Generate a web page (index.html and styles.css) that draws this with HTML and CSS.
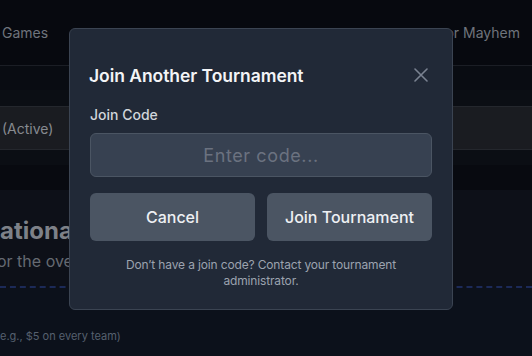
FILE: index.html
```html
<!DOCTYPE html>
<html>
<head>
<meta charset="utf-8">
<link rel="stylesheet" href="styles.css">
</head>
<body>
<div class="page">
  <header class="topbar">
    <span class="tab">Games</span>
    <span class="tab tab-right">or Mayhem</span>
  </header>
  <div class="band band-a"></div>
  <div class="band band-b"></div>
  <div class="row"><span class="row-text">(Active)</span></div>
  <div class="band band-c"></div>
  <div class="band band-d"></div>
  <section class="panel">
    <div class="panel-clip">
      <h2 class="panel-title">ational</h2>
      <p class="panel-sub">or the overall</p>
    </div>
  </section>
  <div class="lower">
    <p class="hint">e.g., $5 on every team)</p>
  </div>
</div>

<div class="modal">
  <div class="modal-head">
    <h3 class="modal-title">Join Another Tournament</h3>
    <button class="close" aria-label="Close">
      <svg width="14" height="14" viewBox="0 0 14 14"><path d="M1 1 L13 13 M13 1 L1 13" stroke="#7a8291" stroke-width="1.6" stroke-linecap="round" fill="none"/></svg>
    </button>
  </div>
  <label class="label">Join Code</label>
  <input class="code" type="text" placeholder="Enter code...">
  <div class="actions">
    <button class="btn">Cancel</button>
    <button class="btn">Join Tournament</button>
  </div>
  <p class="foot">Don’t have a join code? Contact your tournament administrator.</p>
</div>
</body>
</html>
```
FILE: styles.css
```css
* { box-sizing: border-box; }
html, body { margin: 0; padding: 0; }
body {
  width: 532px;
  height: 356px;
  overflow: hidden;
  background: #0c111b;
  font-family: Inter, "Noto Sans", sans-serif;
}
.page { display: flex; flex-direction: column; }
.topbar {
  height: 66px;
  background: #07090f;
  border-bottom: 1px solid #1b1e25;
  display: flex;
  justify-content: space-between;
  align-items: center;
  padding: 0 12px 0 2px;
}
.tab { color: #6f747c; font-size: 14px; }
.band-a { height: 24px; background: #090c12; }
.band-b { height: 16px; background: #0b0e14; }
.row {
  height: 44px;
  background: #1a1c21;
  border-top: 1px solid #24272d;
  border-bottom: 1px solid #24272d;
  display: flex;
  align-items: center;
  padding-left: 2px;
}
.row-text { color: #878a90; font-size: 14px; }
.band-c { height: 15px; background: #0b0e14; }
.band-d { height: 25px; background: #080a10; }
.panel {
  height: 98px;
  background: #0d1018;
  border-bottom: 2px dashed #1c2a58;
  padding-top: 26px;
}
.panel-clip {
  width: 69px;
  overflow: hidden;
  white-space: nowrap;
}
.panel-title {
  margin: 0;
  font-size: 24px;
  font-weight: 700;
  color: #7d8188;
  line-height: 30px;
}
.panel-sub {
  margin: 4px 0 0 -3px;
  font-size: 16px;
  color: #656a72;
  line-height: 22px;
}
.lower { padding-top: 40px; }
.hint { margin: 0; font-size: 11px; color: #56606f; line-height: 16px; }

.modal {
  position: fixed;
  left: 69px;
  top: 28px;
  width: 384px;
  height: 282px;
  background: #212937;
  border: 1px solid #3b4452;
  border-radius: 6px;
  padding: 32px 20px 20px;
  display: flex;
  flex-direction: column;
}
.modal-head {
  display: flex;
  justify-content: space-between;
  align-items: center;
  height: 28px;
}
.modal-title {
  margin: 0 0 0 -1px;
  font-size: 17.5px;
  font-weight: 600;
  color: #f3f4f6;
  letter-spacing: -0.05px;
}
.close {
  background: none;
  border: 0;
  padding: 0;
  margin-right: 4px;
  width: 14px;
  height: 14px;
  display: flex;
}
.label {
  margin-top: 16px;
  font-size: 14px;
  line-height: 20px;
  font-weight: 500;
  color: #d1d5db;
}
.code {
  margin-top: 8px;
  height: 44px;
  width: 100%;
  background: #374151;
  border: 1px solid #4b5563;
  border-radius: 6px;
  text-align: center;
  font-family: inherit;
  font-size: 18px;
  letter-spacing: 0.6px;
  color: #e5e7eb;
  outline: none;
}
.code::placeholder { color: #6b7280; }
.actions {
  margin-top: 16px;
  display: grid;
  grid-template-columns: 1fr 1fr;
  gap: 12px;
}
.btn {
  height: 48px;
  background: #4b5563;
  border: 0;
  border-radius: 6px;
  font-family: inherit;
  font-size: 16px;
  font-weight: 500;
  color: #eef0f3;
}
.foot {
  margin: 16px 0 0;
  text-align: center;
  font-size: 12px;
  letter-spacing: -0.15px;
  line-height: 16px;
  color: #9ca3af;
  padding: 0 30px;
}
```
